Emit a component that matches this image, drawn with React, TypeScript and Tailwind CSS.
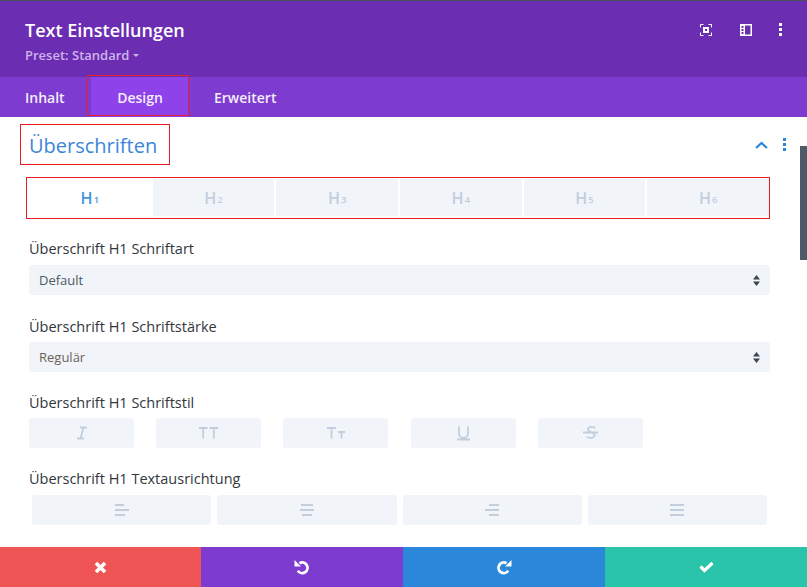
const font = { fontFamily: '"Open Sans", "Noto Sans", sans-serif' };

const headings = ['1', '2', '3', '4', '5', '6'];

function Dots({ className }: { className: string }) {
  return (
    <div className={`flex flex-col gap-[2px] ${className}`}>
      <span className="h-[3px] w-[3px] bg-current" />
      <span className="h-[3px] w-[3px] bg-current" />
      <span className="h-[3px] w-[3px] bg-current" />
    </div>
  );
}

function Label({ children }: { children: string }) {
  return <div className="text-[14.5px] font-medium leading-[18px] text-[#32373c]">{children}</div>;
}

function SelectBox({ value, strong, gap = 'mt-[7px]' }: { value: string; strong?: boolean; gap?: string }) {
  return (
    <div className={`${gap} flex h-[30px] items-center justify-between rounded-[3px] bg-[#f1f5f9] pl-[10px] pr-[10px]`}>
      <span className={`pt-px text-[13px] ${strong ? 'font-medium text-[#4c5866]' : 'text-[#6b6257]'}`}>{value}</span>
      <svg width="7" height="11" viewBox="0 0 7 11" className="text-[#3a4550]">
        <path d="M3.500 0 7 4.500H0zM3.500 11 0 6.500h7z" fill="currentColor" />
      </svg>
    </div>
  );
}

function AlignIcon({ kind }: { kind: 'left' | 'center' | 'right' | 'justify' }) {
  const rows = {
    left: [[0, 9], [0, 14], [0, 10]],
    center: [[1, 12], [0, 14], [2, 10]],
    right: [[4, 10], [0, 14], [4, 10]],
    justify: [[0, 14], [0, 14], [0, 14]],
  }[kind];
  return (
    <svg width="14" height="12" viewBox="0 0 14 12" fill="#c3cedd">
      {rows.map(([x, w], i) => (
        <rect key={i} x={x} y={i * 5} width={w} height="2" />
      ))}
    </svg>
  );
}

function StyleIcon({ kind }: { kind: 'italic' | 'upper' | 'small' | 'under' | 'strike' }) {
  const paths = {
    italic: 'M11 3.500h7M8 14.500h7M14.500 3.500l-3 11',
    upper: 'M3 4h8.500M7.200 4v10.500M13.500 4h8.500M17.800 4v10.500',
    small: 'M4 4h9M8.500 4v10.500M15 8h7M18.500 8v6.500',
    under: 'M8 2.500v7a4.500 4.500 0 0 0 9 0v-7M6 15.500h13',
    strike: 'M17 4.500c-1-1.800-6-2.500-7 .5-.8 2.500 6 3 6.500 6 .5 3-5.500 4-7.500 1.500M5 8.500h15',
  }[kind];
  return (
    <svg width="25" height="18" viewBox="0 0 25 18" fill="none" stroke="#c3cedd" strokeWidth="1.800">
      <path d={paths} />
    </svg>
  );
}

function FooterButton({ color, children }: { color: string; children: React.ReactNode }) {
  return <div className={`flex items-center justify-center ${color}`}>{children}</div>;
}

export default function App() {
  return (
    <div style={font} className="relative flex h-[587px] w-[807px] flex-col overflow-hidden bg-white">
      <div className="h-px bg-[#4a4f5c]" />
      <header className="flex h-[76px] justify-between bg-[#6b2db2] pl-[25px] pr-[25px] pt-[16px] text-white">
        <div>
          <div className="text-[18px] font-semibold leading-[26px]">Text Einstellungen</div>
          <div className="mt-[3px] flex items-center gap-[4px] text-[13px] font-semibold leading-[18px] text-[#cfb4ec]">
            Preset: Standard
            <span className="h-0 w-0 border-x-[3px] border-t-[3px] border-x-transparent border-t-[#cfb4ec]" />
          </div>
        </div>
        <div className="flex items-start gap-[27px] pt-[7px]">
          <svg width="12" height="12" viewBox="0 0 12 12" fill="none" stroke="white">
            <path d="M.5 3.500v-3h3M8.500.5h3v3M11.500 8.500v3h-3M3.500 11.500h-3v-3" />
            <rect x="3.500" y="3.500" width="5" height="5" fill="white" />
            <rect x="5" y="5" width="2" height="2" fill="#6b2db2" stroke="none" />
          </svg>
          <svg width="12" height="12" viewBox="0 0 12 12" fill="white" className="ml-px">
            <path d="M0 0h12v12H0zM5 1.500v9h5.500v-9zM1.500 2v2h2V2zM1.500 5v2h2V5zM1.500 8v2h2V8z" fillRule="evenodd" />
          </svg>
          <Dots className="mt-[-1px] text-white" />
        </div>
      </header>
      <nav className="flex h-[40px] bg-[#7d3bcf] text-[14px] font-semibold text-[#f4edfc]">
        <div className="flex w-[91px] items-center pl-[25px]">Inhalt</div>
        <div className="relative flex w-[98px] items-center justify-center bg-[#8e42ea]">
          Design
          <span className="absolute -left-[4px] -top-[2px] bottom-[1px] right-0 border border-[#e8202a]" />
        </div>
        <div className="flex items-center pl-[25px]">Erweitert</div>
      </nav>

      <main className="flex-1 px-[20px] pt-[7px]">
        <div className="flex items-center justify-between pr-px">
          <div className="flex h-[41px] w-[150px] items-center border border-[#ea1c24] pl-[8px] pt-[2px] text-[20px] text-[#3c86d8]">
            Überschriften
          </div>
          <div className="flex items-center gap-[15px]">
            <svg width="13" height="8" viewBox="0 0 13 8" fill="none" stroke="#2b87da" strokeWidth="2.200">
              <path d="M1 7l5.500-5L12 7" />
            </svg>
            <Dots className="text-[#2b87da]" />
          </div>
        </div>

        <div className="ml-[6px] mt-[12px] flex h-[42px] w-[744px] gap-[2px] border border-[#ea1c24] pl-[2px] pt-px pb-[2px]">
          {headings.map((n, i) => (
            <div
              key={n}
              className={`flex flex-1 items-center justify-center font-semibold ${i === 0 ? 'bg-white text-[#3f97dd]' : 'bg-[#f1f5f9] text-[#c3cedd]'}`}
            >
              <span className="text-[16px] leading-none">H</span>
              <span className="mt-[5px] pl-px text-[9.500px] leading-none">{n}</span>
            </div>
          ))}
        </div>

        <div className="ml-[9px] mr-[17px] mt-[21px]">
          <Label>Überschrift H1 Schriftart</Label>
          <SelectBox value="Default" strong />

          <div className="mt-[23px]">
            <Label>Überschrift H1 Schriftstärke</Label>
            <SelectBox value="Regulär" gap="mt-[6px]" />
          </div>

          <div className="mt-[22px]">
            <Label>Überschrift H1 Schriftstil</Label>
            <div className="mt-[6px] flex gap-[22.200px]">
              {(['italic', 'upper', 'small', 'under', 'strike'] as const).map((kind) => (
                <div key={kind} className="flex h-[30px] w-[105px] items-center justify-center rounded-[3px] bg-[#f1f5f9]">
                  <StyleIcon kind={kind} />
                </div>
              ))}
            </div>
          </div>

          <div className="mt-[22px]">
            <Label>Überschrift H1 Textausrichtung</Label>
            <div className="mx-[3px] mt-[7px] flex gap-[6px]">
              {(['left', 'center', 'right', 'justify'] as const).map((kind) => (
                <div key={kind} className="flex h-[30px] flex-1 items-center justify-center rounded-[3px] bg-[#f1f5f9]">
                  <AlignIcon kind={kind} />
                </div>
              ))}
            </div>
          </div>
        </div>
      </main>

      <footer className="grid h-[40px] grid-cols-[201px_202px_202px_202px]">
        <FooterButton color="bg-[#ef5555]">
          <svg width="13" height="13" viewBox="0 0 13 13" fill="none" stroke="white" strokeWidth="3.600">
            <path d="M2 2l9 9M11 2l-9 9" />
          </svg>
        </FooterButton>
        <FooterButton color="bg-[#7e3bd0]">
          <svg width="16" height="16" viewBox="0 0 16 16" fill="none">
            <path d="M5.500 4.200A5.300 5.300 0 1 1 3.800 11.800" stroke="white" strokeWidth="2.800" />
            <path d="M.5 1v6.500h6.500z" fill="white" />
          </svg>
        </FooterButton>
        <FooterButton color="bg-[#2b87da]">
          <svg width="16" height="16" viewBox="0 0 16 16" fill="none">
            <path d="M10.500 4.200A5.300 5.300 0 1 0 12.200 11.800" stroke="white" strokeWidth="2.800" />
            <path d="M15.500 1v6.500H9z" fill="white" />
          </svg>
        </FooterButton>
        <FooterButton color="bg-[#29c4a9]">
          <svg width="15" height="12" viewBox="0 0 15 12" fill="none" stroke="white" strokeWidth="3.200">
            <path d="M1.500 5.500 5.500 9.500 13.500 2" />
          </svg>
        </FooterButton>
      </footer>

      {/* Scrollbalken liegt über dem Inhalt */}
      <div className="absolute right-0 top-[146px] h-[114px] w-[7px] bg-[#4e5a68]" />
    </div>
  );
}
